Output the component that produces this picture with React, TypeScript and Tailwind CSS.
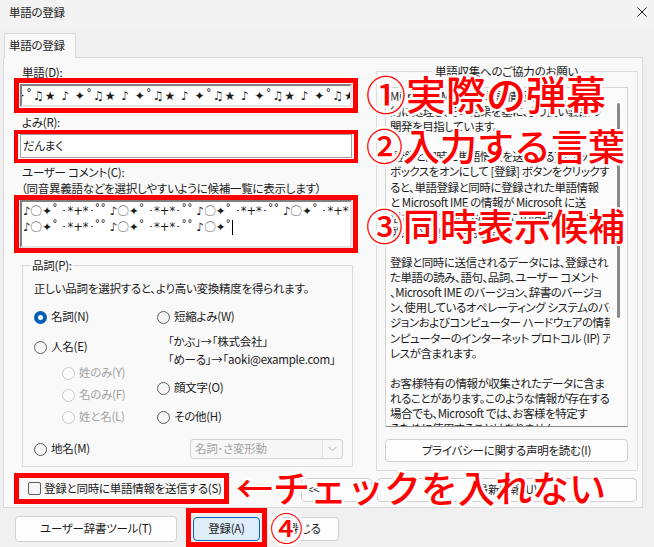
import React from 'react';

function Radio({ label, checked = false, disabled = false }: { label: string; checked?: boolean; disabled?: boolean }) {
  return (
    <div className="flex h-[16px] items-center gap-[4px] whitespace-nowrap">
      {checked ? (
        <span className="flex h-[13px] w-[13px] shrink-0 items-center justify-center rounded-full bg-[#005fb8]">
          <span className="h-[5px] w-[5px] rounded-full bg-white" />
        </span>
      ) : disabled ? (
        <span className="h-[13px] w-[13px] shrink-0 rounded-full border border-[#c8c8c8] bg-[#fbfbfb]" />
      ) : (
        <span className="h-[13px] w-[13px] shrink-0 rounded-full border border-[#5c5c5c] bg-[#f6f6f6]" />
      )}
      <span className={disabled ? 'text-[#a3a3a3]' : ''}>{label}</span>
    </div>
  );
}

const infoLines = [
  'Microsoft IME では、単語情報を収集して統計',
  '的に処理し、その結果を基に、より良い製品の',
  '開発を目指しています。',
  '',
  '[登録と同時に単語情報を送信する] チェック',
  'ボックスをオンにして [登録] ボタンをクリックす',
  'ると、単語登録と同時に登録された単語情報',
  'と Microsoft IME の情報が Microsoft に送',
  '信されます。Microsoft は、この情報を今後の',
  '製品の改善に使用します。',
  '',
  '登録と同時に送信されるデータには、登録され',
  'た単語の読み、語句、品詞、ユーザー コメント',
  '、Microsoft IME のバージョン、辞書のバージョ',
  'ン、使用しているオペレーティング システムのバー',
  'ジョンおよびコンピューター ハードウェアの情報、コ',
  'ンピューターのインターネット プロトコル (IP) アド',
  'レスが含まれます。',
  '',
  'お客様特有の情報が収集されたデータに含ま',
  'れることがあります。このような情報が存在する',
  '場合でも、Microsoft では、お客様を特定す',
  'るために使用することはありません。',
];

const wordUnit = '✦˚♫★ ♪ ';
const commentUnit = '♪〇✦˚ ･*+*･˚˚ ';

export default function App() {
  return (
    <div className="relative h-[547px] w-[654px] overflow-hidden bg-[#f0f0f0] font-['Noto_Sans_CJK_JP',sans-serif] text-[11.5px] tracking-[-0.25px] text-[#1b1b1b] [font-feature-settings:'palt']">
      {/* タイトルバー */}
      <div className="flex h-[29px] items-start justify-between bg-[#f3f3f3]">
        <span className="ml-[9px] mt-[5px] leading-[15px]">単語の登録</span>
        <svg className="mr-[7px] mt-[7px]" width="10" height="10" viewBox="0 0 10 10">
          <path d="M0.5 0.5 L9.5 9.5 M9.5 0.5 L0.5 9.5" stroke="#1b1b1b" strokeWidth="1" />
        </svg>
      </div>

      {/* タブ */}
      <div className="mt-[4px] flex pl-[4px]">
        <div className="relative z-10 -mb-px flex h-[25px] w-[72px] items-center rounded-t-[2px] border border-b-0 border-[#dadada] bg-[#f9f9f9] pl-[4px]">
          単語の登録
        </div>
      </div>

      <div className="ml-[3px] box-border flex h-[451px] w-[640px] flex-col border border-[#dadada] bg-[#f9f9f9]">
        <div className="flex">
          {/* 左カラム */}
          <div className="ml-[10px] flex w-[344px] shrink-0 flex-col">
            <div className="mt-[9px] h-[11px] pl-[8px] leading-[11px]">単語(D):</div>
            <div className="box-border h-[35px] border-[5px] border-[#ff0000] p-px">
              <div className="box-border flex h-[23px] items-center overflow-hidden whitespace-nowrap border-2 border-b-[#e3e3e3] border-l-[#808080] border-r-[#e3e3e3] border-t-[#808080] bg-white font-['DejaVu_Sans',sans-serif] text-[12px] tracking-[1px]">
                <span className="-ml-[7px]">{wordUnit.repeat(8)}</span>
              </div>
            </div>

            <div className="mt-[3px] h-[12px] pl-[8px] leading-[12px]">よみ(R):</div>
            <div className="mt-[2px] box-border h-[33px] border-[4px] border-[#ff0000] px-[2px] pb-px">
              <div className="box-border flex h-[24px] items-center border border-[#a0a0a0] bg-white pl-[2px]">だんまく</div>
            </div>

            <div className="mt-[3px] h-[12px] pl-[8px] leading-[12px]">ユーザー コメント(C):</div>
            <div className="mt-[4px] h-[12px] whitespace-nowrap pl-[7px] leading-[12px]">（同音異義語などを選択しやすいように候補一覧に表示します）</div>
            <div className="mt-px box-border h-[58px] border-[5px] border-[#ff0000] px-px">
              <div className="box-border h-[48px] overflow-hidden border-2 border-b-[#e3e3e3] border-l-[#808080] border-r-[#e3e3e3] border-t-[#808080] bg-white pl-px pt-px font-['DejaVu_Sans',sans-serif] text-[11.5px] leading-[16px] tracking-normal">
                <div className="whitespace-nowrap">{commentUnit.repeat(4)}</div>
                <div className="flex items-center whitespace-nowrap">
                  {commentUnit.repeat(2) + '♪〇✦˚'}
                  <span className="ml-px h-[15px] w-px bg-black" />
                </div>
              </div>
            </div>

            {/* 品詞 */}
            <fieldset className="ml-[8px] mt-[4px] w-[331px] min-w-0 border border-[#dcdcdc] pb-[7px] pl-[11px] pr-[9px] pt-[7px]">
              <legend className="-ml-[3px] h-[16px] px-[1px] leading-[16px]">品詞(P):</legend>
              <div className="h-[16px] whitespace-nowrap leading-[16px]">正しい品詞を選択すると、より高い変換精度を得られます。</div>
              <div className="flex">
                <div className="flex w-[123px] shrink-0 flex-col">
                  <div className="mt-[13px]">
                    <Radio label="名詞(N)" checked />
                  </div>
                  <div className="mt-[14px]">
                    <Radio label="人名(E)" />
                  </div>
                  <div className="ml-[28px] mt-[10px]">
                    <Radio label="姓のみ(Y)" disabled />
                  </div>
                  <div className="ml-[28px] mt-[6px]">
                    <Radio label="名のみ(F)" disabled />
                  </div>
                  <div className="ml-[28px] mt-[6px]">
                    <Radio label="姓と名(L)" disabled />
                  </div>
                </div>
                <div className="flex flex-col">
                  <div className="mt-[13px]">
                    <Radio label="短縮よみ(W)" />
                  </div>
                  <div className="ml-[11px] mt-[8px] h-[16px] whitespace-nowrap leading-[16px]">「かぶ」→「株式会社」</div>
                  <div className="ml-[11px] mt-[2px] h-[16px] whitespace-nowrap leading-[16px]">「めーる」→「aoki@example.com」</div>
                  <div className="mt-[13px]">
                    <Radio label="顔文字(O)" />
                  </div>
                  <div className="mt-[13px]">
                    <Radio label="その他(H)" />
                  </div>
                </div>
              </div>
              <div className="mt-[14px] flex h-[20px] items-center justify-between">
                <Radio label="地名(M)" />
                <div className="box-border flex h-[20px] w-[153px] items-center rounded-[3px] border border-[#d2d2d2] bg-[#f7f7f7] text-[#a3a3a3]">
                  <span className="flex-1 pl-[4px]">名詞･さ変形動</span>
                  <span className="h-[18px] w-px bg-[#e2e2e2]" />
                  <svg className="mx-[5px]" width="9" height="6" viewBox="0 0 9 6">
                    <path d="M0.5 0.8 L4.5 4.8 L8.5 0.8" fill="none" stroke="#b0b0b0" strokeWidth="1" />
                  </svg>
                </div>
              </div>
            </fieldset>
          </div>

          {/* 右カラム */}
          <fieldset className="ml-[18px] mt-[5px] w-[262px] min-w-0 shrink-0 border border-[#dcdcdc] pb-[8px] pl-[8px] pr-[9px] pt-[8px]">
            <legend className="mx-auto h-[16px] px-[3px] leading-[16px]">単語収集へのご協力のお願い</legend>
            <div className="box-border flex h-[340px] w-[243px] overflow-hidden border border-[#d4d4d4] border-b-[#8c8c8c] bg-[#fbfbfb]">
              <div className="min-w-0 flex-1 overflow-hidden pl-[4px] pt-px leading-[15.1px] tracking-[-0.45px]">
                {infoLines.map((line, i) => (
                  <div key={i} className="h-[15.1px] whitespace-nowrap">
                    {line}
                  </div>
                ))}
              </div>
              <div className="flex w-[17px] shrink-0 justify-center">
                <div className="mt-[15px] h-[215px] w-[3px] rounded-full bg-[#8a8a8a]" />
              </div>
            </div>
            <div className="mt-[12px] box-border flex h-[23px] items-center justify-center rounded-[4px] border border-[#d0d0d0] bg-[#fdfdfd]">
              プライバシーに関する声明を読む(I)
            </div>
          </fieldset>
        </div>

        {/* 下段 */}
        <div className="mt-[2px] flex items-start">
          <div className="ml-[10px] box-border flex h-[31px] w-[215px] shrink-0 items-center gap-[3px] border-[5px] border-[#ff0000] pl-[9px]">
            <span className="box-border h-[13px] w-[13px] shrink-0 rounded-[2px] border border-[#5c5c5c] bg-[#f6f6f6]" />
            <span className="whitespace-nowrap">登録と同時に単語情報を送信する(S)</span>
          </div>
          <div className="ml-[72px] mt-[5px] box-border flex h-[24px] w-[71px] shrink-0 items-center whitespace-nowrap rounded-[4px] border border-[#d0d0d0] bg-[#fdfdfd] pl-[5px]">
            &lt;&lt;
          </div>
          <div className="ml-[5px] mt-[5px] box-border flex h-[24px] w-[260px] shrink-0 items-center justify-center rounded-[4px] border border-[#d0d0d0] bg-[#fdfdfd]">
            最新情報(U)
          </div>
        </div>
      </div>

      {/* ダイアログボタン */}
      <div className="flex items-start">
        <div className="ml-[15px] mt-[8px] box-border flex h-[26px] w-[162px] items-center justify-center rounded-[4px] border border-[#d0d0d0] bg-[#fdfdfd]">
          ユーザー辞書ツール(T)
        </div>
        <div className="ml-[9px] box-border h-[39px] w-[81px] border-[5px] border-[#ff0000] px-[2px] pt-[4px]">
          <div className="box-border flex h-[24px] items-center justify-center rounded-[4px] border border-[#0067c0] bg-[#dfecf9]">
            登録(A)
          </div>
        </div>
        <div className="ml-[4px] mt-[9px] box-border flex h-[24px] w-[68px] items-center justify-center rounded-[4px] border border-[#d0d0d0] bg-[#fdfdfd]">
          閉じる
        </div>
      </div>

      {/* 注釈 */}
      <div className="pointer-events-none absolute left-[366px] top-[73px] whitespace-nowrap font-['Noto_Sans_CJK_JP',sans-serif] text-[40px] font-medium leading-[40px] tracking-normal text-[#ff0000] [font-feature-settings:normal] [text-shadow:2px_0_#fff,-2px_0_#fff,0_2px_#fff,0_-2px_#fff,2px_2px_#fff,-2px_-2px_#fff,2px_-2px_#fff,-2px_2px_#fff]">
        ①実際の弾幕
      </div>
      <div className="pointer-events-none absolute left-[366px] top-[125px] whitespace-nowrap font-['Noto_Sans_CJK_JP',sans-serif] text-[37px] font-medium leading-[40px] tracking-normal text-[#ff0000] [font-feature-settings:normal] [text-shadow:2px_0_#fff,-2px_0_#fff,0_2px_#fff,0_-2px_#fff,2px_2px_#fff,-2px_-2px_#fff,2px_-2px_#fff,-2px_2px_#fff]">
        ②入力する言葉
      </div>
      <div className="pointer-events-none absolute left-[366px] top-[205px] whitespace-nowrap font-['Noto_Sans_CJK_JP',sans-serif] text-[37px] font-medium leading-[40px] tracking-normal text-[#ff0000] [font-feature-settings:normal] [text-shadow:2px_0_#fff,-2px_0_#fff,0_2px_#fff,0_-2px_#fff,2px_2px_#fff,-2px_-2px_#fff,2px_-2px_#fff,-2px_2px_#fff]">
        ③同時表示候補
      </div>
      <div className="pointer-events-none absolute left-[236px] top-[467px] whitespace-nowrap font-['Noto_Sans_CJK_JP',sans-serif] text-[37px] font-medium leading-[40px] tracking-normal text-[#ff0000] [font-feature-settings:normal] [text-shadow:2px_0_#fff,-2px_0_#fff,0_2px_#fff,0_-2px_#fff,2px_2px_#fff,-2px_-2px_#fff,2px_-2px_#fff,-2px_2px_#fff]">
        ←チェックを入れない
      </div>
      <div className="pointer-events-none absolute left-[270px] top-[509px] whitespace-nowrap font-['Noto_Sans_CJK_JP',sans-serif] text-[33px] font-medium leading-[36px] tracking-normal text-[#ff0000] [font-feature-settings:normal] [text-shadow:2px_0_#fff,-2px_0_#fff,0_2px_#fff,0_-2px_#fff,2px_2px_#fff,-2px_-2px_#fff,2px_-2px_#fff,-2px_2px_#fff]">
        ④
      </div>
    </div>
  );
}
